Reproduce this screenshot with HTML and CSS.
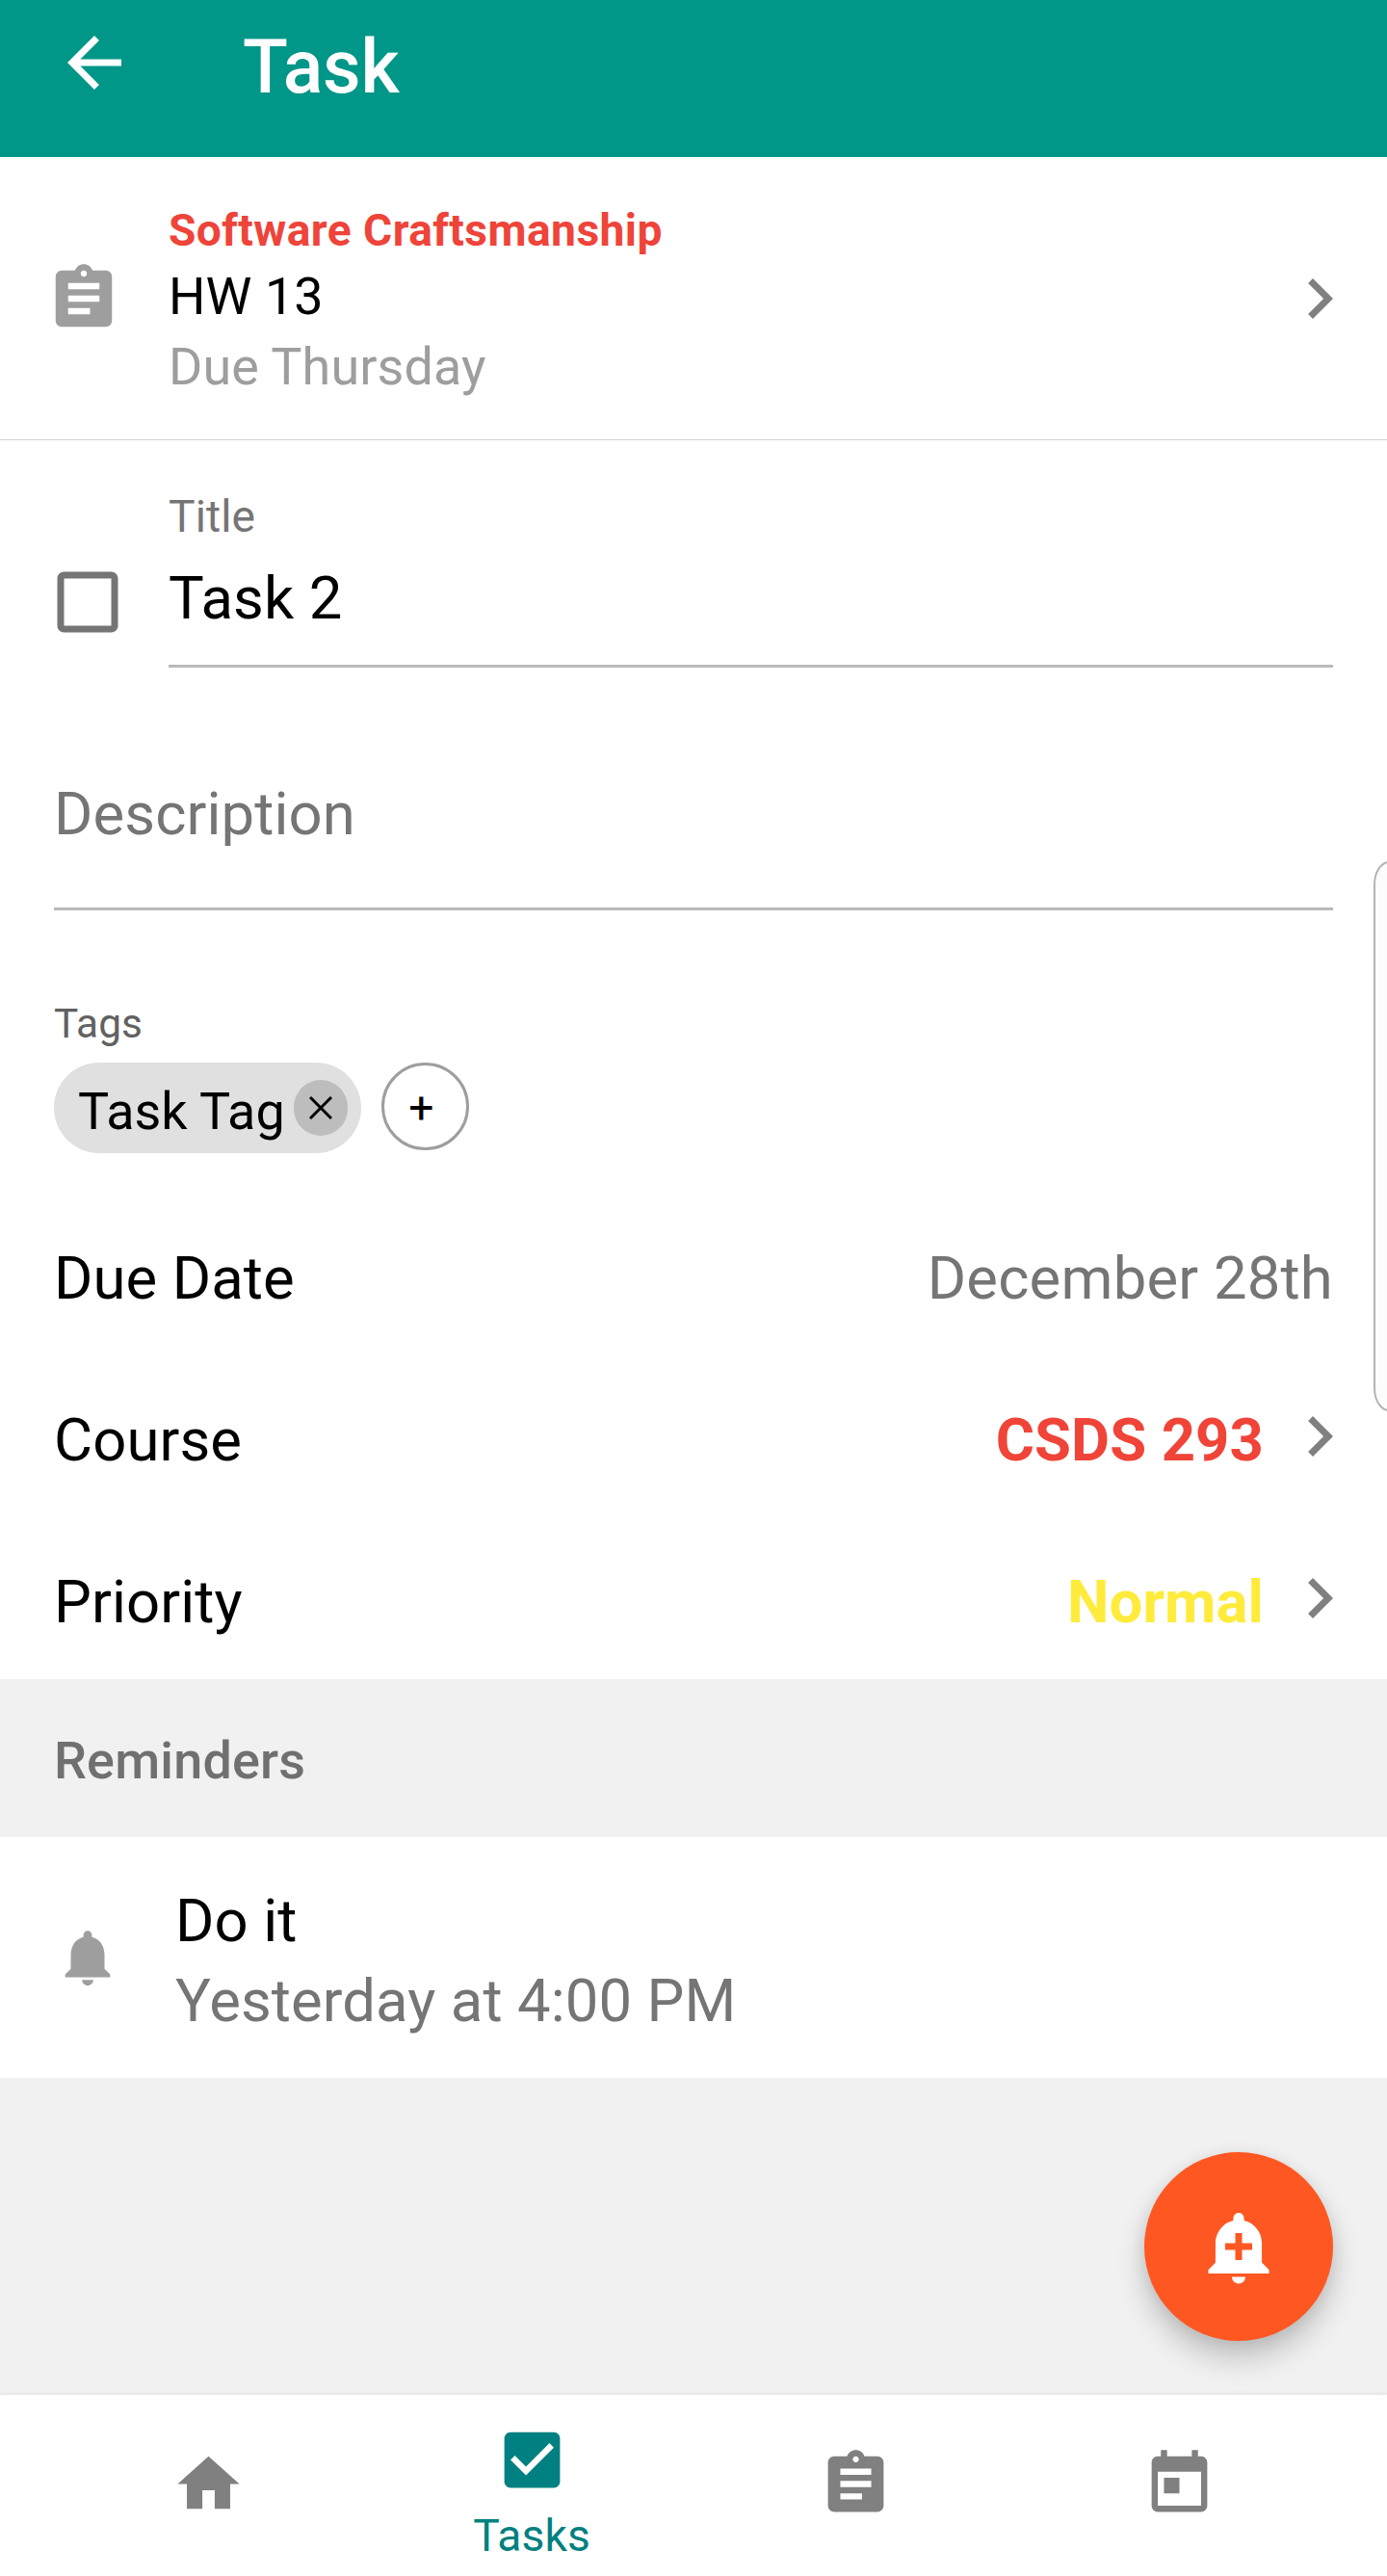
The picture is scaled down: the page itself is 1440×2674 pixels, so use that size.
FILE: index.html
```html
<!DOCTYPE html>
<html lang="en">
<head>
<meta charset="utf-8">
<title>Task</title>
<link rel="stylesheet" href="styles.css">
</head>
<body>
<div class="screen">
  <header class="app-bar">
    <svg class="icon-84" viewBox="0 0 24 24"><path d="M20 11H7.83l5.59-5.59L12 4l-8 8 8 8 1.41-1.41L7.83 13H20v-2z"/></svg>
    <h1 class="app-title">Task</h1>
  </header>

  <section class="assignment">
    <svg class="assignment-icon" viewBox="0 0 24 24"><path d="M19 3h-4.18C14.4 1.84 13.3 1 12 1c-1.3 0-2.4.84-2.82 2H5c-1.1 0-2 .9-2 2v14c0 1.1.9 2 2 2h14c1.1 0 2-.9 2-2V5c0-1.1-.9-2-2-2zm-7 0c.55 0 1 .45 1 1s-.45 1-1 1-1-.45-1-1 .45-1 1-1zm2 14H7v-2h7v2zm3-4H7v-2h10v2zm0-4H7V7h10v2z"/></svg>
    <div class="assignment-text">
      <div class="assignment-course">Software Craftsmanship</div>
      <div class="assignment-name">HW 13</div>
      <div class="assignment-due">Due Thursday</div>
    </div>
    <svg class="icon-84 chevron" viewBox="0 0 24 24"><path d="M10 6L8.59 7.41 13.17 12l-4.58 4.59L10 18l6-6z"/></svg>
  </section>

  <section class="details">
    <div class="title-row">
      <svg class="icon-84 checkbox" viewBox="0 0 24 24"><path d="M19 5v14H5V5h14m0-2H5c-1.1 0-2 .9-2 2v14c0 1.1.9 2 2 2h14c1.1 0 2-.9 2-2V5c0-1.1-.9-2-2-2z"/></svg>
      <div class="title-field">
        <div class="title-label">Title</div>
        <div class="title-value">Task 2</div>
      </div>
    </div>
    <div class="description">Description</div>
    <div class="tags-label">Tags</div>
    <div class="tags">
      <div class="chip">
        <span>Task Tag</span>
        <span class="chip-remove"><svg viewBox="0 0 24 24"><path d="M1 1L23 23M23 1L1 23"/></svg></span>
      </div>
      <div class="tag-add"><span>+</span></div>
    </div>
    <div class="property">
      <span class="property-text">Due Date</span>
      <span class="property-text value-date">December 28th</span>
    </div>
    <div class="property has-chevron">
      <span class="property-text">Course</span>
      <span class="property-text value-course">CSDS 293</span>
      <svg class="icon-84 chevron" viewBox="0 0 24 24"><path d="M10 6L8.59 7.41 13.17 12l-4.58 4.59L10 18l6-6z"/></svg>
    </div>
    <div class="property has-chevron">
      <span class="property-text">Priority</span>
      <span class="property-text value-priority">Normal</span>
      <svg class="icon-84 chevron" viewBox="0 0 24 24"><path d="M10 6L8.59 7.41 13.17 12l-4.58 4.59L10 18l6-6z"/></svg>
    </div>
  </section>

  <h2 class="reminders-heading">Reminders</h2>
  <section class="reminder">
    <svg class="bell" viewBox="0 0 24 24"><path d="M12 22c1.1 0 2-.9 2-2h-4c0 1.1.89 2 2 2zm6-6v-5c0-3.07-1.64-5.64-4.5-6.32V4c0-.83-.67-1.5-1.5-1.5s-1.5.67-1.5 1.5v.68C7.63 5.36 6 7.92 6 11v5l-2 2v1h16v-1l-2-2z"/></svg>
    <div class="reminder-text">
      <div>Do it</div>
      <div class="reminder-time">Yesterday at 4:00 PM</div>
    </div>
  </section>

  <nav class="tabs">
    <div class="tab"><svg viewBox="0 0 24 24"><path d="M10 20v-6h4v6h5v-8h3L12 3 2 12h3v8z"/></svg></div>
    <div class="tab active">
      <svg viewBox="0 0 24 24"><path d="M19 3H5c-1.11 0-2 .9-2 2v14c0 1.1.89 2 2 2h14c1.11 0 2-.9 2-2V5c0-1.1-.89-2-2-2zm-9 14l-5-5 1.41-1.41L10 14.17l7.59-7.59L19 8l-9 9z"/></svg>
      <span>Tasks</span>
    </div>
    <div class="tab"><svg viewBox="0 0 24 24"><path d="M19 3h-4.18C14.4 1.84 13.3 1 12 1c-1.3 0-2.4.84-2.82 2H5c-1.1 0-2 .9-2 2v14c0 1.1.9 2 2 2h14c1.1 0 2-.9 2-2V5c0-1.1-.9-2-2-2zm-7 0c.55 0 1 .45 1 1s-.45 1-1 1-1-.45-1-1 .45-1 1-1zm2 14H7v-2h7v2zm3-4H7v-2h10v2zm0-4H7V7h10v2z"/></svg></div>
    <div class="tab"><svg viewBox="0 0 24 24"><path d="M19 3h-1V1h-2v2H8V1H6v2H5c-1.11 0-1.99.9-1.99 2L3 19c0 1.1.89 2 2 2h14c1.1 0 2-.9 2-2V5c0-1.1-.9-2-2-2zm0 16H5V8h14v11zM7 10h5v5H7z"/></svg></div>
  </nav>

  <div class="fab">
    <svg class="icon-84" viewBox="0 0 24 24"><path d="M10.01 21.01c0 1.1.89 1.99 1.99 1.99s1.99-.89 1.99-1.99h-3.98zm8.87-4.19V11c0-3.25-2.25-5.97-5.29-6.69v-.72C13.59 2.71 12.88 2 12 2s-1.59.71-1.59 1.59v.72C7.37 5.03 5.12 7.75 5.12 11v5.82L3 18.94V20h18v-1.06l-2.12-2.12zM16 13.01h-3v3h-2v-3H8V11h3V8h2v3h3v2.01z"/></svg>
  </div>
  <div class="edge-handle"></div>
</div>
</body>
</html>
```
FILE: styles.css
```css
* { box-sizing: border-box; }

body {
  margin: 0;
  font-family: Roboto, sans-serif;
  font-size: 61.6px;
  letter-spacing: .1px;
  color: #000;
}

svg { display: block; flex: none; fill: currentColor; }

.screen {
  position: relative;
  width: 1440px;
  height: 2674px;
  overflow: hidden;
  display: flex;
  flex-direction: column;
  background: #f1f1f1;
}

.icon-84 { width: 84px; height: 84px; }
.chevron { color: #808080; }

.app-bar {
  display: flex;
  align-items: flex-start;
  gap: 112px;
  height: 163px;
  padding: 23px 56px 0;
  background: #009688;
  color: #fff;
}
.app-title {
  margin: 2px 0 0;
  font-size: 77px;
  font-weight: 500;
  line-height: 90px;
  letter-spacing: -.2px;
}

.assignment {
  display: flex;
  align-items: center;
  height: 294px;
  padding: 0 28px 0 48px;
  background: #fff;
  border-bottom: 1px solid #d2d2d2;
}
.assignment-icon { width: 78px; height: 78px; color: #9e9e9e; }
.assignment-text {
  flex: 1;
  margin-left: 49px;
  padding-top: 4px;
  font-size: 53.9px;
}
.assignment-course {
  font-size: 46.2px;
  font-weight: 700;
  line-height: 68px;
  letter-spacing: .42px;
  color: #ee4439;
}
.assignment-name { line-height: 70px; }
.assignment-due { line-height: 75px; color: #9e9e9e; }

.details {
  height: 1286px;
  padding: 49px 56px 0;
  background: #fff;
}
.title-row {
  display: flex;
  align-items: flex-end;
  margin-left: -7px;
}
.checkbox { margin-bottom: 26px; color: #757575; }
.title-field {
  flex: 1;
  margin-left: 42px;
  padding-bottom: 14px;
  border-bottom: 3px solid #bababa;
}
.title-label {
  font-size: 46.2px;
  line-height: 60px;
  color: #757575;
}
.title-value { line-height: 110px; }
.description {
  margin-top: 102px;
  padding-bottom: 47px;
  line-height: 100px;
  color: #757575;
  border-bottom: 3px solid #bababa;
}
.tags-label {
  margin-top: 92px;
  font-size: 42.35px;
  line-height: 51px;
  color: #616161;
}
.tags {
  display: flex;
  align-items: flex-start;
  gap: 21px;
  margin: 15px 0 42px;
}
.chip {
  display: flex;
  align-items: center;
  justify-content: space-between;
  width: 319px;
  height: 94px;
  padding: 0 14px 0 25px;
  border-radius: 47px;
  background: #e0e0e0;
  font-size: 53.9px;
  line-height: 86px;
  letter-spacing: 0;
}
.chip > span:first-child { padding-top: 7px; }
.chip-remove {
  display: flex;
  align-items: center;
  justify-content: center;
  width: 56px;
  height: 58px;
  border-radius: 28px;
  background: #bdbdbd;
}
.chip-remove svg {
  width: 24px;
  height: 24px;
  stroke: #000;
  stroke-width: 3;
}
.tag-add {
  display: flex;
  justify-content: center;
  width: 91px;
  height: 91px;
  padding-right: 8px;
  border: 3px solid #9e9e9e;
  border-radius: 50%;
  font-size: 46.2px;
  line-height: 88px;
}

.property {
  display: flex;
  align-items: center;
  justify-content: space-between;
  height: 168px;
}
.has-chevron { margin-right: -28px; }
.property-text { padding-top: 8px; line-height: 80px; }
.property .chevron { margin-left: 16px; }
.value-date { color: #757575; letter-spacing: .2px; }
.value-course, .value-priority { margin-left: auto; font-weight: 700; }
.value-course { color: #f04438; }
.value-priority { color: #ffeb3b; }

.reminders-heading {
  height: 164px;
  margin: 0;
  padding: 5px 56px 0;
  font-size: 53.9px;
  font-weight: 500;
  line-height: 159px;
  letter-spacing: .2px;
  color: #707070;
}
.reminder {
  display: flex;
  align-items: center;
  gap: 56px;
  height: 250px;
  padding: 0 56px;
  background: #fff;
}
.bell { width: 70px; height: 70px; color: #9e9e9e; }
.reminder-text { padding-top: 7px; line-height: 83px; }
.reminder-time { color: #757575; }

.tabs {
  display: flex;
  height: 188px;
  margin-top: auto;
  padding: 0 48px;
  background: #fff;
  box-shadow: 0 -1px 4px rgba(0, 0, 0, .08);
}
.tab {
  flex: 1;
  display: flex;
  flex-direction: column;
  align-items: center;
  gap: 13px;
  padding-top: 54px;
  color: #808080;
}
.tab svg { width: 77px; height: 77px; }
.tab.active { padding-top: 29px; color: #008080; }
.tab span { font-size: 46.2px; line-height: 54px; }

.fab {
  position: absolute;
  right: 56px;
  bottom: 244px;
  display: flex;
  align-items: center;
  justify-content: center;
  width: 196px;
  height: 196px;
  border-radius: 50%;
  background: #ff5722;
  color: #fff;
  box-shadow: 0 18px 30px rgba(0, 0, 0, .2), 0 2px 16px rgba(0, 0, 0, .08);
}
.edge-handle {
  position: absolute;
  top: 894px;
  right: -20px;
  width: 34px;
  height: 571px;
  border: 2px solid #b4b4b4;
  border-radius: 16px / 24px;
  background: #fcfcfc;
}
```
